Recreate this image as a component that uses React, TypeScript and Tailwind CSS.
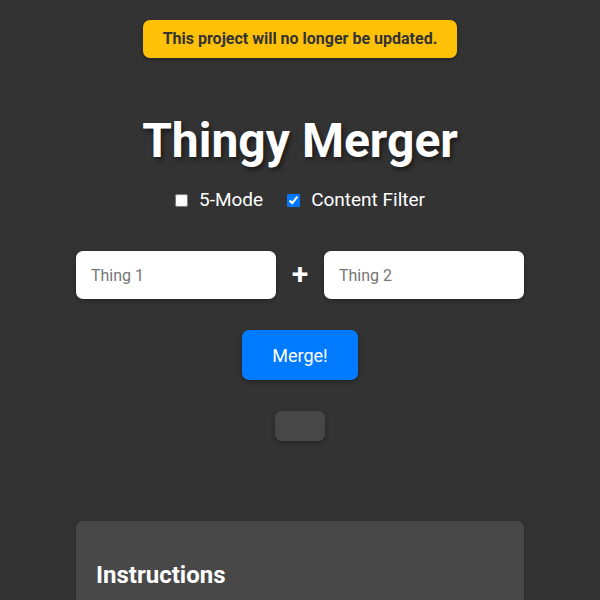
import React from "react";

export default function App() {
  return (
    <div className="min-h-[600px] w-full bg-[#333333] text-white flex flex-col items-center overflow-hidden" style={{ fontFamily: "Roboto, 'Noto Sans', sans-serif" }}>
      <div className="mt-[20px] w-[314px] h-[38px] rounded-[7px] bg-[#ffc107] text-[#333333] font-bold text-[16px] flex items-center justify-center shadow-[0_2px_4px_rgba(0,0,0,0.3)]">
        This project will no longer be updated.
      </div>
      <h1 className="mt-[52px] text-[48px] leading-[62px] font-bold [text-shadow:2px_3px_5px_rgba(0,0,0,0.5)]">
        Thingy Merger
      </h1>
      <div className="mt-[16px] flex items-center text-[19px] leading-[24px]">
        <label className="flex items-center">
          <input type="checkbox" className="w-[13px] h-[13px] mr-[11px] accent-[#0075ff]" />
          <span>5-Mode</span>
        </label>
        <label className="flex items-center ml-[24px]">
          <input type="checkbox" defaultChecked className="w-[13px] h-[13px] mr-[11px] accent-[#0075ff]" />
          <span>Content Filter</span>
        </label>
      </div>
      <div className="mt-[39px] flex items-center">
        <input placeholder="Thing 1" className="w-[200px] h-[48px] rounded-[7px] bg-white px-[15px] text-[16px] text-[#333] placeholder:text-[#757575] outline-none shadow-[0_2px_5px_rgba(0,0,0,0.3)]" />
        <span className="w-[48px] text-center text-[30px] font-semibold leading-none pb-[2px]">+</span>
        <input placeholder="Thing 2" className="w-[200px] h-[48px] rounded-[7px] bg-white px-[15px] text-[16px] text-[#333] placeholder:text-[#757575] outline-none shadow-[0_2px_5px_rgba(0,0,0,0.3)]" />
      </div>
      <button className="mt-[31px] w-[116px] h-[50px] rounded-[7px] bg-[#007bff] text-white text-[18px] shadow-[0_2px_5px_rgba(0,0,0,0.3)]">
        Merge!
      </button>
      <div className="mt-[31px] w-[50px] h-[30px] rounded-[7px] bg-[#474747] shadow-[0_2px_5px_rgba(0,0,0,0.3)]" />
      <div className="mt-[80px] w-[448px] h-[120px] rounded-[7px] bg-[#484848] px-[20px] pt-[40px] shadow-[0_2px_5px_rgba(0,0,0,0.25)]">
        <h2 className="text-[24px] font-bold leading-[28px]">Instructions</h2>
      </div>
    </div>
  );
}
